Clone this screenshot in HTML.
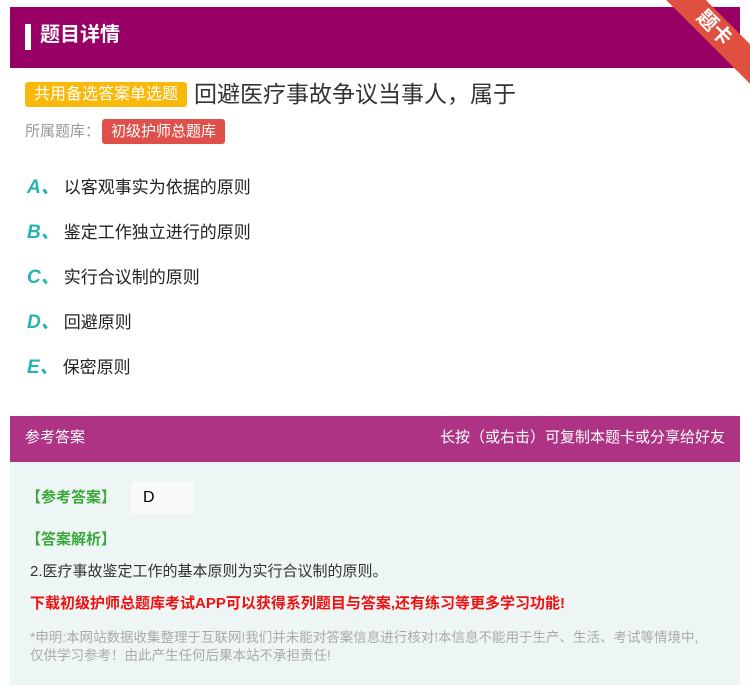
<!DOCTYPE html>
<html><head><meta charset="utf-8"><style>
body{margin:0;width:750px;height:685px;background:#fff;font-family:"Liberation Sans","Noto Sans CJK SC",sans-serif;position:relative;overflow:hidden}
.hd{position:absolute;left:10px;top:7px;width:730px;height:61px;background:#990066}
.hd .bar{position:absolute;left:15px;top:17px;width:6px;height:26px;background:#fff}
.hd .t{position:absolute;left:30px;top:13px;color:#fff;font-size:20px;font-weight:bold;line-height:30px}
.rib{position:absolute;right:-34px;top:14px;width:140px;height:28px;background:#e05040;transform:rotate(45deg);color:#fff;font-size:20px;text-align:center;line-height:28px;font-weight:bold}
.q{position:absolute;left:25px;top:78px;font-size:23px;color:#333;line-height:32px}
.tag{display:inline-block;background:#f9b90a;color:#fff;font-size:16px;line-height:25px;padding:0 9px;border-radius:3px;vertical-align:3px;margin-right:7px}
.lib{position:absolute;left:25px;top:119px;font-size:15px;color:#999;line-height:25px}
.lib span{display:inline-block;background:#e0504a;color:#fff;padding:0 9px;border-radius:3px;margin-left:2px}
.op{position:absolute;left:27px;font-size:17px;color:#222;line-height:24px}
.op b{color:#29b3b0;font-style:italic;font-size:19px;margin-right:4px}
.ah{position:absolute;left:10px;top:416px;width:730px;height:46px;background:#ae3385;color:#fff;font-size:15px;line-height:44px}
.ab{position:absolute;left:10px;top:462px;width:730px;height:223px;background:#eef6f5}
.g{color:#3aa83a;font-weight:bold;font-size:15px;position:absolute;left:16px}
</style></head><body>
<div class="hd"><div class="bar"></div><div class="t">题目详情</div></div>
<div class="rib">题卡</div>
<div class="q"><span class="tag">共用备选答案单选题</span>回避医疗事故争议当事人，属于</div>
<div class="lib">所属题库：<span>初级护师总题库</span></div>
<div class="op" style="top:176px"><b>A、</b>以客观事实为依据的原则</div>
<div class="op" style="top:221px"><b>B、</b>鉴定工作独立进行的原则</div>
<div class="op" style="top:266px"><b>C、</b>实行合议制的原则</div>
<div class="op" style="top:311px"><b>D、</b>回避原则</div>
<div class="op" style="top:356px"><b>E、</b>保密原则</div>
<div class="ah"><span style="position:absolute;left:15px">参考答案</span><span style="position:absolute;right:15px">长按（或右击）可复制本题卡或分享给好友</span></div>
<div class="ab">
<div class="g" style="top:24px">【参考答案】</div>
<div style="position:absolute;left:121px;top:20px;width:63px;height:32px;background:#fafafa;font-size:16px;line-height:32px;padding-left:12px;box-sizing:border-box">D</div>
<div class="g" style="top:66px">【答案解析】</div>
<div style="position:absolute;left:20px;top:98px;font-size:15px;color:#333">2.医疗事故鉴定工作的基本原则为实行合议制的原则。</div>
<div style="position:absolute;left:20px;top:130px;font-size:15px;color:#ee1111;font-weight:bold">下载初级护师总题库考试APP可以获得系列题目与答案,还有练习等更多学习功能!</div>
<div style="position:absolute;left:20px;top:167px;width:672px;font-size:13.5px;color:#aaa;line-height:18px">*申明:本网站数据收集整理于互联网!我们并未能对答案信息进行核对!本信息不能用于生产、生活、考试等情境中,仅供学习参考！由此产生任何后果本站不承担责任!</div>
</div>
</body></html>
